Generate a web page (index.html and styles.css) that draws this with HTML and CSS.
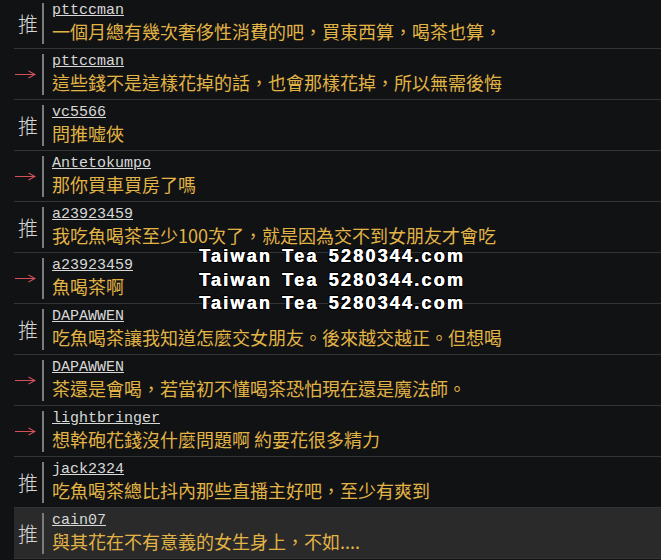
FILE: index.html
```
<!DOCTYPE html>
<html lang="zh-Hant">
<head>
    <meta charset="UTF-8">
    <meta name="viewport" content="width=device-width, initial-scale=1.0">
    <title>推文</title>
    <link rel="stylesheet" href="styles.css">
</head>
<body>
    <div class="push-list">
        <div class="push">
            <div class="tag">推</div>
            <div class="push-body">
                <span class="userid">pttccman</span>
                <div class="content">一個月總有幾次奢侈性消費的吧，買東西算，喝茶也算，</div>
            </div>
        </div>
        <div class="push">
            <div class="tag arrow"><svg width="21" height="10" viewBox="0 0 21 10"><path d="M0 5.5H20M13.5 2L20 5.5L13.5 9" fill="none" stroke="#d4505a" stroke-width="1.1"/></svg></div>
            <div class="push-body">
                <span class="userid">pttccman</span>
                <div class="content">這些錢不是這樣花掉的話，也會那樣花掉，所以無需後悔</div>
            </div>
        </div>
        <div class="push">
            <div class="tag">推</div>
            <div class="push-body">
                <span class="userid">vc5566</span>
                <div class="content">問推嘘俠</div>
            </div>
        </div>
        <div class="push">
            <div class="tag arrow"><svg width="21" height="10" viewBox="0 0 21 10"><path d="M0 5.5H20M13.5 2L20 5.5L13.5 9" fill="none" stroke="#d4505a" stroke-width="1.1"/></svg></div>
            <div class="push-body">
                <span class="userid">Antetokumpo</span>
                <div class="content">那你買車買房了嗎</div>
            </div>
        </div>
        <div class="push">
            <div class="tag">推</div>
            <div class="push-body">
                <span class="userid">a23923459</span>
                <div class="content">我吃魚喝茶至少100次了，就是因為交不到女朋友才會吃</div>
            </div>
        </div>
        <div class="push">
            <div class="tag arrow"><svg width="21" height="10" viewBox="0 0 21 10"><path d="M0 5.5H20M13.5 2L20 5.5L13.5 9" fill="none" stroke="#d4505a" stroke-width="1.1"/></svg></div>
            <div class="push-body">
                <span class="userid">a23923459</span>
                <div class="content">魚喝茶啊</div>
            </div>
        </div>
        <div class="push">
            <div class="tag">推</div>
            <div class="push-body">
                <span class="userid">DAPAWWEN</span>
                <div class="content">吃魚喝茶讓我知道怎麼交女朋友。後來越交越正。但想喝</div>
            </div>
        </div>
        <div class="push">
            <div class="tag arrow"><svg width="21" height="10" viewBox="0 0 21 10"><path d="M0 5.5H20M13.5 2L20 5.5L13.5 9" fill="none" stroke="#d4505a" stroke-width="1.1"/></svg></div>
            <div class="push-body">
                <span class="userid">DAPAWWEN</span>
                <div class="content">茶還是會喝，若當初不懂喝茶恐怕現在還是魔法師。</div>
            </div>
        </div>
        <div class="push">
            <div class="tag arrow"><svg width="21" height="10" viewBox="0 0 21 10"><path d="M0 5.5H20M13.5 2L20 5.5L13.5 9" fill="none" stroke="#d4505a" stroke-width="1.1"/></svg></div>
            <div class="push-body">
                <span class="userid">lightbringer</span>
                <div class="content">想幹砲花錢沒什麼問題啊 約要花很多精力</div>
            </div>
        </div>
        <div class="push">
            <div class="tag">推</div>
            <div class="push-body">
                <span class="userid">jack2324</span>
                <div class="content">吃魚喝茶總比抖內那些直播主好吧，至少有爽到</div>
            </div>
        </div>
        <div class="push active">
            <div class="tag">推</div>
            <div class="push-body">
                <span class="userid">cain07</span>
                <div class="content">與其花在不有意義的女生身上，不如....</div>
            </div>
        </div>
    </div>

    <div class="watermark">
        <div>Taiwan Tea 5280344.com</div>
        <div>Taiwan Tea 5280344.com</div>
        <div>Taiwan Tea 5280344.com</div>
    </div>
</body>
</html>
```
FILE: styles.css
```
body {
    margin: 0;
    background-color: #111214;
    color: #ddd;
    font-family: "Noto Sans CJK TC", sans-serif;
    overflow: hidden;
}

.push-list {
    margin-top: -2px;
    margin-left: 14px;
}

.push {
    display: flex;
    height: 50px;
    border-bottom: 1px solid #333438;
}

.push.active {
    background-color: #2a2a2a;
}

.tag {
    width: 28px;
    display: flex;
    align-items: center;
    justify-content: center;
    font-size: 20px;
    font-weight: 300;
    color: #d6d6d6;
}

.tag.arrow {
    justify-content: flex-start;
    padding-left: 1px;
    width: 27px;
}

.tag svg {
    display: block;
}

.push-body {
    flex: 1;
    margin: 5px 0 4px;
    border-left: 2px solid #7b7b7b;
    padding-left: 8px;
}

.userid {
    display: block;
    font-family: "Courier New", "Liberation Mono", monospace;
    font-size: 15px;
    line-height: 16px;
    color: #d8d8d8;
    text-decoration: underline;
}

.content {
    font-size: 18px;
    line-height: 24px;
    color: #e2b445;
    white-space: nowrap;
}

.watermark {
    position: absolute;
    left: 199px;
    top: 245px;
    font-family: "Liberation Sans", Arial, sans-serif;
    font-weight: bold;
    font-size: 18px;
    line-height: 23.5px;
    letter-spacing: 2.2px;
    word-spacing: 3px;
    color: #fff;
    text-shadow: 0.5px 0 0 #fff, -1px -1px 0 #000, 1px -1px 0 #000, -1px 1px 0 #000, 1px 1px 0 #000;
}
```
